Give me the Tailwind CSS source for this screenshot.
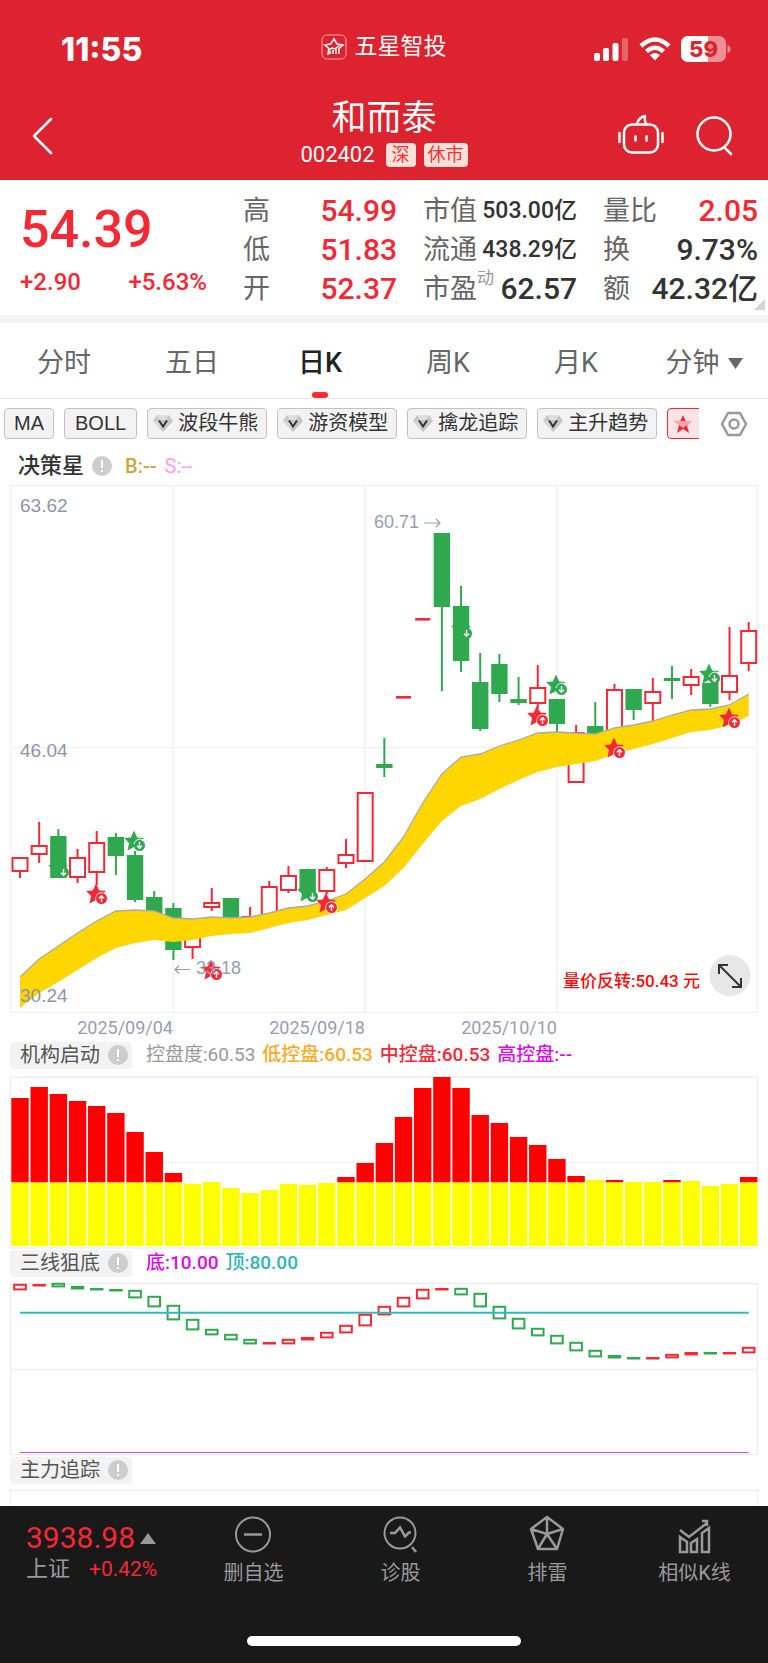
<!DOCTYPE html>
<html lang="zh-CN">
<head>
<meta charset="utf-8">
<meta name="viewport" content="width=device-width, initial-scale=1">
<title>和而泰 002402</title>
<script src="https://cdn.jsdelivr.net/npm/@tailwindcss/browser@4"></script>
</head>
<body class="bg-white font-[Roboto,'Noto_Sans_CJK_SC',sans-serif] text-[#333]">
<div class="flex min-h-screen flex-col">

<header class="flex h-[180px] flex-col bg-[#dc232f] text-white">
  <div class="grid h-[94px] grid-cols-3 items-center px-[37px]">
    <div class="pt-[6px] pl-[24px] font-[Inter,sans-serif] text-[32px] leading-[32px] font-extrabold">11:55</div>
    <div class="flex items-center justify-center gap-[7px]">
      <svg class="h-[26px] w-[26px]" viewBox="0 0 26 26" fill="none" stroke="#fff"><rect x="1" y="1" width="24" height="24" rx="5" stroke="#f3a9a9"/><path d="M10 18.500l-3 1.500 .8-5.500-4-3.500 5.700-1L13 5l3 5 6 1-4 3.500M9 20v-3M12 20v-4M15 20v-5M18 20v-6M7 17l4-3 3 1 5-4" stroke-width="1.500"/></svg>
      <span class="text-[23px] leading-[32px]">五星智投</span>
    </div>
    <div class="flex items-center justify-end gap-[10px] pt-[4px]">
      <svg class="h-[24px] w-[35px]" viewBox="0 0 35 24" fill="#fff"><rect x="0" y="16" width="6" height="8" rx="2"/><rect x="9" y="11" width="6" height="13" rx="2"/><rect x="18.500" y="6" width="6" height="18" rx="2"/><rect x="28" y="1" width="6" height="23" rx="2" opacity=".3"/></svg>
      <svg class="h-[24px] w-[32px]" viewBox="0 0 32 24" fill="none" stroke="#fff" stroke-width="4.500"><path d="M2 9Q16-4 30 9"/><path d="M7.500 14.500Q16 7 24.500 14.500"/><path d="M16 23.500l-5-5.500q5-4 10 0z" fill="#fff" stroke="none"/></svg>
      <svg class="h-[26px] w-[50px]" viewBox="0 0 50 26"><defs><clipPath id="lvl"><rect width="27" height="26"/></clipPath></defs><rect width="45" height="26" rx="7" fill="#ee8f96"/><rect width="45" height="26" rx="7" fill="#fff" clip-path="url(#lvl)"/><path d="M46.500 9q3 1 3 4t-3 4z" fill="#ee8f96"/><text x="22.500" y="21" text-anchor="middle" font-family="Inter" font-weight="800" font-size="22" fill="#dc232f">59</text></svg>
    </div>
  </div>
  <div class="grid flex-1 grid-cols-[1fr_auto_1fr] items-start px-[33px]">
    <button aria-label="返回" class="mt-[20px] w-[24px]"><svg class="h-[44px] w-[24px]" viewBox="0 0 24 44" fill="none" stroke="#fff" stroke-width="2.500" stroke-linecap="round" stroke-linejoin="round"><path d="M18 5L1 22l17 17"/></svg></button>
    <div class="flex flex-col items-center pt-[2px]">
      <h1 class="text-[35px] leading-[45px]">和而泰</h1>
      <div class="flex items-center gap-[8px]">
        <span class="mr-[3px] text-[22px] leading-[28px]">002402</span>
        <span class="rounded-[4px] bg-[#fde0da] px-[6px] text-[18px] leading-[24px] text-[#f5332f]">深</span>
        <span class="rounded-[4px] bg-[#fde0da] px-[4px] text-[18px] leading-[24px] text-[#f5332f]">休市</span>
      </div>
    </div>
    <div class="mt-[18px] flex justify-end gap-[30px]">
      <button aria-label="智能助手"><svg class="h-[46px] w-[48px]" viewBox="0 0 48 46" fill="none" stroke="#fff" stroke-width="2.500" stroke-linecap="round" stroke-linejoin="round"><rect x="7" y="12.500" width="34" height="28" rx="8"/><path d="M20 12q2-7 8-8-1 4 1 8M2.500 21v9M45.500 21v9M18.500 24.500v4M29.500 24.500v4"/></svg></button>
      <button aria-label="搜索"><svg class="h-[46px] w-[40px]" viewBox="0 0 40 46" fill="none" stroke="#fff" stroke-width="2.500" stroke-linecap="round"><circle cx="19" cy="22" r="16.500"/><path d="M29 35l7 7"/></svg></button>
    </div>
  </div>
</header>

<section class="relative grid h-[135px] grid-cols-[197fr_154fr_154fr_155fr] gap-x-[26px] pt-[11px] pr-[10px] pl-[20px]">
  <div class="flex flex-col text-[#f52836]">
    <div class="pt-[8px] text-[52px] leading-[62px] font-medium">54.39</div>
    <div class="flex justify-between pt-[6px] pr-[10px] text-[24px] leading-[30px] font-medium"><span>+2.90</span><span>+5.63%</span></div>
  </div>
  <dl class="text-[27px] leading-[40px]">
    <div class="flex h-[39px] justify-between"><dt class="text-[#666]">高</dt><dd class="text-[30px] font-medium text-[#f52836]">54.99</dd></div>
    <div class="flex h-[39px] justify-between"><dt class="text-[#666]">低</dt><dd class="text-[30px] font-medium text-[#f52836]">51.83</dd></div>
    <div class="flex h-[39px] justify-between"><dt class="text-[#666]">开</dt><dd class="text-[30px] font-medium text-[#f52836]">52.37</dd></div>
  </dl>
  <dl class="text-[27px] leading-[40px] whitespace-nowrap">
    <div class="flex h-[39px] justify-between"><dt class="text-[#666]">市值</dt><dd class="text-[23px] font-medium">503.00亿</dd></div>
    <div class="flex h-[39px] justify-between"><dt class="text-[#666]">流通</dt><dd class="text-[23px] font-medium">438.29亿</dd></div>
    <div class="flex h-[39px] justify-between"><dt class="flex text-[#666]">市盈<span class="text-[17px] leading-[18px] text-[#999]">动</span></dt><dd class="text-[30px] font-medium">62.57</dd></div>
  </dl>
  <dl class="text-[27px] leading-[40px] whitespace-nowrap">
    <div class="flex h-[39px] justify-between"><dt class="text-[#666]">量比</dt><dd class="text-[30px] font-medium text-[#f52836]">2.05</dd></div>
    <div class="flex h-[39px] justify-between"><dt class="text-[#666]">换</dt><dd class="text-[30px] font-medium">9.73%</dd></div>
    <div class="flex h-[39px] justify-between"><dt class="text-[#666]">额</dt><dd class="text-[30px] font-medium">42.32亿</dd></div>
  </dl>
  <svg class="absolute right-[3px] bottom-[5px] h-[11px] w-[11px]" viewBox="0 0 11 11"><path d="M11 0v11H0z" fill="#d4d4d4"/></svg>
</section>

<nav class="grid h-[84px] grid-cols-6 border-t-8 border-b border-t-[#f3f3f3] border-b-[#e8e8e8] text-[27px] text-[#666]">
  <button class="pt-[5px]">分时</button>
  <button class="pt-[5px]">五日</button>
  <button class="relative pt-[5px] font-medium text-[#222]">日K<span class="absolute bottom-0 left-1/2 h-[6px] w-[16px] -translate-x-1/2 rounded-[3px] bg-[#fb2c36]"></span></button>
  <button class="pt-[5px]">周K</button>
  <button class="pt-[5px]">月K</button>
  <button class="flex items-center justify-center gap-[8px] pt-[5px]">分钟<svg class="h-[11px] w-[15px]" viewBox="0 0 15 11"><path d="M0 0h15L7.500 11z" fill="#666"/></svg></button>
</nav>

<svg class="hidden" aria-hidden="true">
  <symbol id="gem" viewBox="0 0 20 17"><path d="M4 0h12l4 6-10 11L0 6z" fill="#c6c6c6"/><path d="M4 0l3 5h6l3-5z" fill="#dedede"/><path d="M0 6h6l4 11z" fill="#d6d6d6"/><path d="M6 5.500l4 6 4-6" fill="none" stroke="#333" stroke-width="2"/></symbol>
  <symbol id="info" viewBox="0 0 20 20"><circle cx="10" cy="10" r="10" fill="#cdcdcd"/><path d="M10 4v8M10 14v2" stroke="#fff" stroke-width="2"/></symbol>
</svg>
<div class="flex h-[40px] items-end pl-[4px]">
  <div class="flex min-w-0 flex-1 gap-[10px] overflow-hidden text-[20px] leading-[29px] whitespace-nowrap">
    <button class="h-[31px] shrink-0 rounded-[4px] border border-[#c2c2c2] bg-[#f3f3f3] px-[9px] font-['Liberation_Sans',sans-serif]">MA</button>
    <button class="h-[31px] shrink-0 rounded-[4px] border border-[#c2c2c2] bg-[#f3f3f3] px-[10px] font-['Liberation_Sans',sans-serif]">BOLL</button>
    <button class="flex h-[31px] w-[120px] shrink-0 items-center justify-between rounded-[4px] border border-[#c2c2c2] bg-[#f3f3f3] pr-[8px] pl-[5px]"><svg class="h-[17px] w-[20px]"><use href="#gem"/></svg>波段牛熊</button>
    <button class="flex h-[31px] w-[120px] shrink-0 items-center justify-between rounded-[4px] border border-[#c2c2c2] bg-[#f3f3f3] pr-[8px] pl-[5px]"><svg class="h-[17px] w-[20px]"><use href="#gem"/></svg>游资模型</button>
    <button class="flex h-[31px] w-[120px] shrink-0 items-center justify-between rounded-[4px] border border-[#c2c2c2] bg-[#f3f3f3] pr-[8px] pl-[5px]"><svg class="h-[17px] w-[20px]"><use href="#gem"/></svg>擒龙追踪</button>
    <button class="flex h-[31px] w-[120px] shrink-0 items-center justify-between rounded-[4px] border border-[#c2c2c2] bg-[#f3f3f3] pr-[8px] pl-[5px]"><svg class="h-[17px] w-[20px]"><use href="#gem"/></svg>主升趋势</button>
    <button aria-label="决策星" class="flex h-[31px] w-[120px] shrink-0 items-center rounded-[4px] border border-[#f52836] bg-[#fee4e6] pl-[5px]"><svg class="h-[20px] w-[20px]" viewBox="0 0 20 20"><path d="M10 1l2.700 6H19l-5 4 2 8-6-4-6 4 2-8-5-4h6.300z" fill="#f52836"/><path d="M1 7h18l-5 4-4 3-4-3z" fill="#fba6ac"/></svg></button>
  </div>
  <button aria-label="设置" class="flex h-[31px] w-[69px] items-center justify-center"><svg class="h-[26px] w-[28px]" viewBox="0 0 28 26" fill="none" stroke="#999" stroke-width="2.500"><path d="M8 2h12l6 11-6 11H8L2 13z" stroke-linejoin="round"/><circle cx="14" cy="13" r="4.500"/></svg></button>
</div>
<div class="flex h-[41px] items-center gap-[8px] pt-[13px] pl-[18px] text-[20px] leading-[26px]">
  <span class="text-[22px] font-medium">决策星</span>
  <svg class="mr-[5px] h-[20px] w-[20px]"><use href="#info"/></svg>
  <span class="font-medium text-[#c9a83e]">B:--</span><span class="text-[#f99cf9]">S:--</span>
</div>

<main class="flex flex-1 flex-col">
  <svg id="kline" class="h-auto w-full" viewBox="0 480 768 561" role="img" aria-label="日K线图">
    <g fill="none" stroke="#f0f1f5" stroke-width="1.500"><rect x="10.500" y="485.500" width="747" height="527"/><path d="M10 747.500H757M173.500 486v527M365 486v527M557 486v527"/></g>
    <g id="candles"></g>
    <path id="band" fill="#ffd600"/><path id="bandTop" fill="none" stroke="#aaa" stroke-width="1.300"/>
    <g id="stars"></g>
    <g fill="#9094a6" font-family="Liberation Sans" font-size="19"><text x="20" y="512">63.62</text><text x="20" y="757">46.04</text><text x="20" y="1002">30.24</text></g>
    <g fill="#9a9db0" font-family="Liberation Sans" font-size="18"><text x="374" y="528">60.71</text><text x="196" y="974">33.18</text></g>
    <g fill="none" stroke="#9a9db0" stroke-width="1.200"><path d="M424 523h16M436 519l4 4-4 4M190 969.500h-15M179 965.500l-4 4 4 4"/></g>
    <g fill="#9a9db0" font-family="Roboto" font-size="18" text-anchor="end"><text x="173" y="1034">2025/09/04</text><text x="365" y="1034">2025/09/18</text><text x="557" y="1034">2025/10/10</text></g>
    <text x="700" y="987" text-anchor="end" fill="#fe0a0a" font-family="Roboto, 'Noto Sans CJK SC'" font-weight="500" font-size="17">量价反转:50.43 元</text>
    <circle cx="730" cy="975.500" r="20.500" fill="#e7e7e7"/><path d="M719 974v-9h9M719 965l22 22M732 987h9v-9" fill="none" stroke="#333" stroke-width="2"/>
  </svg>

  <div class="flex h-[28px] items-center gap-[7px] pl-[10px] text-[19px] whitespace-nowrap">
    <div class="mr-[7px] flex h-[27px] w-[122px] items-center justify-between rounded-[4px] bg-[#f3f3f3] pr-[4px] pl-[10px] text-[20px] leading-[27px] text-[#555]">机构启动<svg class="h-[20px] w-[20px]"><use href="#info"/></svg></div>
    <span class="text-[#999]">控盘度:60.53</span><span class="font-medium text-[#ffaa27]">低控盘:60.53</span><span class="font-medium text-[#f52836]">中控盘:60.53</span><span class="font-medium text-[#dc0be6]">高控盘:--</span>
  </div>
  <svg class="h-auto w-full" viewBox="0 1069 768 180" role="img" aria-label="机构启动">
    <path d="M10 1162.500h748" stroke="#f0f0f0"/>
    <rect x="10.500" y="1077" width="747" height="171" fill="none" stroke="#eee" stroke-width="1.500"/><g id="bars"></g>
  </svg>

  <div class="flex h-[28px] items-center gap-[7px] pl-[10px] text-[19px] whitespace-nowrap">
    <div class="mr-[7px] flex h-[27px] w-[122px] items-center justify-between rounded-[4px] bg-[#f3f3f3] pr-[4px] pl-[10px] text-[20px] leading-[27px] text-[#555]">三线狙底<svg class="h-[20px] w-[20px]"><use href="#info"/></svg></div>
    <span class="font-medium text-[#dc0be6]">底:10.00</span><span class="font-medium text-[#2eb5b5]">顶:80.00</span>
  </div>
  <svg class="h-auto w-full" viewBox="0 1277 768 179" role="img" aria-label="三线狙底">
    <g fill="none" stroke="#eee" stroke-width="1.500"><rect x="10.500" y="1283.500" width="747" height="171"/><path d="M10 1369.500h748"/></g>
    <g id="boxes"></g>
    <path d="M20 1312.700h728.700" stroke="#35b8bb" stroke-width="2"/><path d="M20 1452.500h728.700" stroke="#d94be6" stroke-width="1"/>
  </svg>

  <div class="flex h-[28px] items-center pl-[10px] text-[20px]">
    <div class="flex h-[27px] w-[122px] items-center justify-between rounded-[4px] bg-[#f3f3f3] pr-[4px] pl-[10px] leading-[27px] text-[#555]">主力追踪<svg class="h-[20px] w-[20px]"><use href="#info"/></svg></div>
  </div>
  <div class="mx-[10px] mt-[6px] h-[16px] border border-b-0 border-[#ececec]"></div>
</main>

<footer class="h-[157px] bg-[#191919] text-[#999]">
  <div class="grid h-[130px] grid-cols-[180px_repeat(4,1fr)] pt-[8px]">
    <a href="#" class="flex flex-col pt-[8px] pl-[26px]">
      <span class="flex items-center gap-[5px] text-[30px] leading-[32px] text-[#f52836]">3938.98<svg class="h-[11px] w-[16px]" viewBox="0 0 16 11"><path d="M0 11h16L8 0z" fill="#999"/></svg></span>
      <span class="flex gap-[19px] text-[22px] leading-[30px]">上证<span class="text-[21px] text-[#f52836]">+0.42%</span></span>
    </a>
    <button class="flex flex-col items-center text-[20px] leading-[28px]"><svg class="mb-[5px] h-[40px] w-[40px]" viewBox="0 0 40 40" fill="none" stroke="#999" stroke-width="2"><circle cx="19" cy="20.500" r="17"/><path d="M10 20.500h18" stroke-width="2.500"/></svg>删自选</button>
    <button class="flex flex-col items-center text-[20px] leading-[28px]"><svg class="mb-[5px] h-[40px] w-[40px]" viewBox="0 0 40 40" fill="none" stroke="#999" stroke-width="2"><circle cx="19" cy="19" r="15.500"/><path d="M31 33l4 5" stroke-width="2.500"/><path d="M9 19h5l5-5.500 5 9 4-4h2" stroke-width="2.500"/></svg>诊股</button>
    <button class="flex flex-col items-center text-[20px] leading-[28px]"><svg class="mb-[5px] h-[40px] w-[40px]" viewBox="0 0 40 40" fill="none" stroke="#999" stroke-width="2.500" stroke-linejoin="round"><path d="M19 3l16 12-6 20H10L3 15zM19 3v17M35 15l-16 5-16-5M10 35l9-15 10 15"/></svg>排雷</button>
    <button class="flex flex-col items-center text-[20px] leading-[28px]"><svg class="mb-[5px] h-[40px] w-[40px]" viewBox="0 0 40 40" fill="none" stroke="#999" stroke-width="2.500"><path d="M5 23l7 5v10H5zM16 29l6-4v13h-6zM27 19l7-5v24h-7zM5 16l9 7L32 9M27 7h5v5"/></svg>相似K线</button>
  </div>
  <div class="mx-auto h-[10px] w-[274px] rounded-full bg-white"></div>
</footer>
</div>

<script>
const NS = 'http://www.w3.org/2000/svg';
const RED = '#f52836', GREEN = '#2fa84f';
const xAt = i => 20 + i * 19.176;
function add(parent, tag, attrs) {
  const el = document.createElementNS(NS, tag);
  for (const k in attrs) el.setAttribute(k, attrs[k]);
  parent.appendChild(el);
  return el;
}

// Each candle: [rising, high, body top, body bottom, low]
const candles = [
[1,858,858,871,878],[1,822,846,854,863],[0,829,836,878,878],[1,849,858,877,883],[1,831,843,872,885],
[0,833,837,856,875],[0,851,855,900,902],[0,891,897,915,915],[0,903,908,950,960],[1,930,930,947,959],
[1,888,903,907,911],[0,898,898,918,918],[1,907,917,922,922],[1,881,887,922,922],[1,866,876,890,893],
[0,869,869,892,892],[1,867,870,891,894],[1,839,855,863,868],[1,793,793,861,861],[0,738,764,768,777],
[1,697,697,697,697],[1,619,619,619,619],[0,533,533,607,691],[0,586,606,661,672],[0,653,682,729,731],
[0,654,664,694,702],[0,677,699,703,705],[1,665,688,703,708],[0,699,699,724,732],[1,725,733,782,782],
[0,702,726,734,734],[1,684,690,738,738],[0,689,689,710,720],[1,678,692,703,721],[0,666,678,681,699],
[1,669,677,685,695],[0,683,683,704,707],[1,627,676,692,700],[1,622,631,663,671]];
const gC = document.getElementById('candles');
candles.forEach(([up, hi, top, bot, lo], i) => {
  const x = xAt(i), c = up ? RED : GREEN;
  if (top === bot) { add(gC, 'rect', {x: x - 7.5, y: top - 1, width: 15, height: 2.6, fill: c}); return; }
  add(gC, 'path', {d: `M${x} ${hi}V${top}M${x} ${bot}V${lo}`, stroke: c, 'stroke-width': 2});
  if (up) add(gC, 'rect', {x: x - 7.5, y: top, width: 15, height: bot - top, fill: '#fff', stroke: c, 'stroke-width': 2});
  else add(gC, 'rect', {x: x - 8.2, y: top, width: 16.4, height: bot - top, fill: c});
});

const upper = [977,959,946,933,921,911,910,911,918,919,917,918,917,913,908,906,901,894,879,862,837,803,774,757,754,746,740,733,732,733,734,728,725,721,715,710,709,705,694];
const lower = [1008,993,982,970,958,948,943,940,942,940,936,934,933,928,923,920,915,910,898,886,868,844,821,806,799,789,780,772,767,764,761,754,749,744,738,732,730,725,716];
const up = upper.map((y, i) => xAt(i) + ' ' + y).join('L');
const down = lower.map((y, i) => xAt(i) + ' ' + y).reverse().join('L');
document.getElementById('band').setAttribute('d', `M${up}L${down}Z`);
document.getElementById('bandTop').setAttribute('d', 'M' + up);

// Signal stars: [buy, x, y]
const signals = [[1,96,894],[1,211,970],[1,326,903],[1,537,716],[1,614,748],[1,729,718],[0,134,841],[0,58,868],[0,307,892],[0,461,629],[0,556,685],[0,709,674]];
const gS = document.getElementById('stars');
signals.forEach(([buy, x, y]) => {
  const c = buy ? RED : GREEN, g = add(gS, 'g', {transform: `translate(${x} ${y})`});
  add(g, 'path', {d: 'M0-10.500L3.200-3.600 9.800-3 5 2 6.500 9.500 0 6-6.500 9.500-5 2-9.800-3-3.200-3.600Z', fill: c});
  add(g, 'circle', {cx: 5.500, cy: 4.500, r: 6.200, fill: buy ? '#fff' : 'none'});
  add(g, 'circle', {cx: 5.500, cy: 4.500, r: 5.500, fill: c});
  add(g, 'path', {d: buy ? 'M5.500 8V2M3 4.300L5.500 1.800 8 4.300' : 'M5.500 1V7M3 4.700L5.500 7.200 8 4.700', fill: 'none', stroke: '#fff', 'stroke-width': 1.400});
  if (!buy) add(g, 'path', {d: 'M0 3A6 6 0 0 1 9-1', fill: 'none', stroke: '#fff', 'stroke-width': 0.900, opacity: y === 841 || y === 685 || y === 674 ? 1 : 0});
});

const tops = [1098,1087,1094,1101,1106,1113,1132,1152,1173,1184,1182,1188,1193,1190,1184,1185,1183,1177,1163,1143,1117,1088,1077,1088,1115,1123,1137,1145,1159,1176,1180,1180,1182,1182,1180,1181,1186,1184,1177];
const strong = [0,1,2,3,4,5,6,7,8,17,18,19,20,21,22,23,24,25,26,27,28,29,31,34,38];
const gB = document.getElementById('bars');
tops.forEach((t, i) => {
  const x = xAt(i) - 8.7, hot = strong.includes(i), base = hot ? 1182.5 : t;
  if (hot) add(gB, 'rect', {x, y: t, width: 17.4, height: base - t, fill: '#fe0000'});
  add(gB, 'rect', {x, y: base, width: 17.4, height: 1246 - base, fill: '#ff0'});
});

// Box ranges in the third pane: [rising, top, bottom]
const boxes = [[1,1284,1290],[1,1284,1286],[0,1283,1287],[0,1286,1289],[0,1288,1290],[0,1289,1291],[0,1290,1298],[0,1296,1307],[0,1305,1320],[0,1319,1330],[0,1329,1335],[0,1334,1340],[0,1339,1344],[1,1342,1344],[1,1339,1344],[1,1337,1340],[1,1332,1338],[1,1325,1333],[1,1314,1326],[1,1306,1315],[1,1297,1307],[1,1289,1299],[1,1288,1290],[0,1288,1295],[0,1293,1307],[0,1306,1319],[0,1318,1329],[0,1328,1336],[0,1335,1344],[0,1342,1351],[0,1350,1357],[0,1355,1358],[0,1357,1359],[1,1357,1359],[1,1354,1358],[1,1352,1355],[0,1352,1354],[1,1352,1354],[1,1347,1353]];
const gX = document.getElementById('boxes');
boxes.forEach(([r, t, b], i) => {
  const c = r ? RED : GREEN, x = xAt(i);
  if (b - t <= 3) add(gX, 'rect', {x: x - 6.7, y: t, width: 13.4, height: b - t + 0.5, fill: c});
  else add(gX, 'rect', {x: x - 5.8, y: t + 0.800, width: 11.6, height: b - t - 1.400, fill: 'none', stroke: c, 'stroke-width': 2});
});
</script>
</body>
</html>
